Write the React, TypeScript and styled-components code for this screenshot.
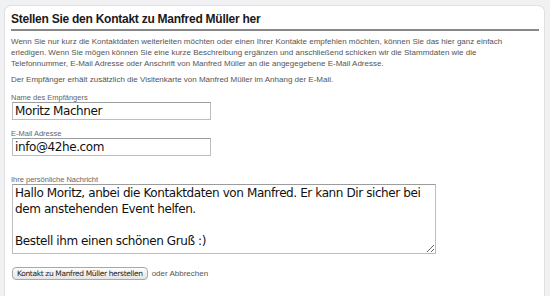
import React from "react";
import styled, { createGlobalStyle } from "styled-components";

const GlobalStyle = createGlobalStyle`
  html, body {
    margin: 0;
    padding: 0;
    background: #f1f1f3;
    overflow: hidden;
  }
`;

const Page = styled.div`
  padding: 5px 5px 0 4px;
  height: 296px;
  box-sizing: border-box;
`;

const Panel = styled.div`
  background: #fff;
  border: 1px solid #e0e0e3;
  border-bottom: none;
  border-radius: 7px 7px 0 0;
  height: 100%;
  box-sizing: border-box;
  padding: 6px 5px 0 6px;
  font-family: "Liberation Sans", Arial, sans-serif;
  color: #555;
`;

const Title = styled.h2`
  margin: 0;
  font-size: 12px;
  line-height: 14px;
  letter-spacing: -0.25px;
  font-weight: bold;
  color: #1a1a1a;
  padding-bottom: 3px;
  border-bottom: 2px solid #888;
`;

const Text = styled.p`
  margin: 5px 0 0;
  font-size: 8px;
  line-height: 11px;
  color: #555;
`;

const Field = styled.div<{ $top: number }>`
  display: flex;
  flex-direction: column;
  align-items: flex-start;
  margin-top: ${(p) => p.$top}px;
`;

const Label = styled.label`
  font-size: 7.5px;
  line-height: 8px;
  color: #666;
`;

const Input = styled.input`
  width: 199px;
  height: 18px;
  margin-left: 1px;
  box-sizing: border-box;
  border: 1px solid #bdbdbd;
  border-top-color: #9c9c9c;
  padding: 0 2px;
  font-family: "DejaVu Sans", "Lucida Grande", sans-serif;
  font-size: 12px;
  letter-spacing: -0.4px;
  color: #111;
  outline: none;
`;

const Message = styled.textarea`
  width: 424px;
  height: 70px;
  margin: 0 0 0 1px;
  box-sizing: border-box;
  border: 1px solid #bdbdbd;
  border-top-color: #9c9c9c;
  padding: 0 2px;
  font-family: "DejaVu Sans", "Lucida Grande", sans-serif;
  font-size: 12px;
  line-height: 16px;
  letter-spacing: -0.4px;
  color: #111;
  outline: none;
  resize: both;
`;

const Actions = styled.div`
  display: flex;
  align-items: center;
  gap: 4px;
  margin-top: 13px;
  padding-left: 1px;
`;

const Button = styled.button`
  height: 13px;
  padding: 0 4px;
  border: 1px solid #a8a8a8;
  border-radius: 4px;
  background: linear-gradient(#fdfdfd, #e4e4e4);
  font-family: "DejaVu Sans", "Lucida Grande", sans-serif;
  font-size: 7.5px;
  line-height: 11px;
  letter-spacing: -0.35px;
  color: #222;
`;

const Cancel = styled.span`
  font-size: 8px;
  color: #555;
`;

export default function App() {
  return (
    <Page>
      <GlobalStyle />
      <Panel>
        <Title>Stellen Sie den Kontakt zu Manfred Müller her</Title>
        <Text>
          Wenn Sie nur kurz die Kontaktdaten weiterleiten möchten oder einen
          Ihrer Kontakte empfehlen möchten, können Sie das hier ganz einfach
          <br />
          erledigen. Wenn Sie mögen können Sie eine kurze Beschreibung ergänzen
          und anschließend schicken wir die Stammdaten wie die
          <br />
          Telefonnummer, E-Mail Adresse oder Anschrift von Manfred Müller an die
          angegegebene E-Mail Adresse.
        </Text>
        <Text>
          Der Empfänger erhält zusätzlich die Visitenkarte von Manfred Müller im
          Anhang der E-Mail.
        </Text>
        <Field $top={9}>
          <Label>Name des Empfängers</Label>
          <Input defaultValue="Moritz Machner" />
        </Field>
        <Field $top={10}>
          <Label>E-Mail Adresse</Label>
          <Input defaultValue="info@42he.com" />
        </Field>
        <Field $top={20}>
          <Label>Ihre persönliche Nachricht</Label>
          <Message
            defaultValue={
              "Hallo Moritz, anbei die Kontaktdaten von Manfred. Er kann Dir sicher bei dem anstehenden Event helfen.\n\nBestell ihm einen schönen Gruß :)"
            }
          />
        </Field>
        <Actions>
          <Button>Kontakt zu Manfred Müller herstellen</Button>
          <Cancel>oder Abbrechen</Cancel>
        </Actions>
      </Panel>
    </Page>
  );
}
